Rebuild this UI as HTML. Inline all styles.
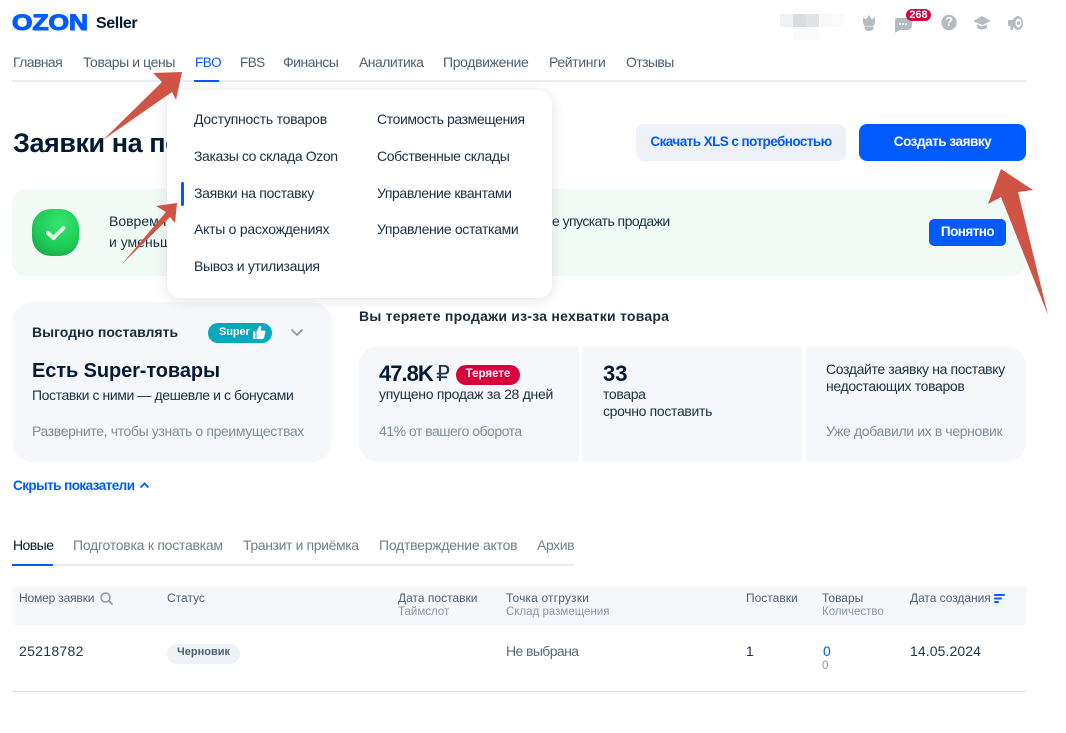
<!DOCTYPE html>
<html lang="ru"><head><meta charset="utf-8"><title>Ozon Seller</title>
<style>
*{box-sizing:border-box}
html,body{margin:0;padding:0;background:#fff}
body{width:1066px;height:733px;position:relative;overflow:hidden;font-family:"Liberation Sans",sans-serif;color:#001a34}
.t{position:absolute;white-space:nowrap;font-size:14px;line-height:20px}
.b{position:absolute}
.nav{color:#4d6175;top:52px}
.m{color:#1b2f45}
.g{color:#808d9a}
.th{font-size:12px;line-height:14px;color:#4d5f73}
.sub{font-size:11.5px;line-height:14px;color:#8b97a3}
.tab{color:#6f7f8f;top:535px}
</style></head><body>

<svg class="b" style="left:10px;top:8px" width="82" height="28"><text x="2" y="22" font-family="Liberation Sans" font-weight="700" font-size="22" fill="#005bff" stroke="#005bff" stroke-width="1.1" textLength="76" lengthAdjust="spacingAndGlyphs">OZON</text></svg>
<span class="t" style="left:96px;top:14px;font-size:16px;font-weight:700;color:#001a34;letter-spacing:-.4px">Seller</span>

<span class="t nav" style="left:13px;letter-spacing:-.6px">Главная</span>
<span class="t nav" style="left:83px;letter-spacing:-.4px">Товары и цены</span>
<span class="t nav" style="left:195px;top:52.500px;color:#005bff;font-size:13.500px;letter-spacing:-.55px">FBO</span>
<span class="t nav" style="left:240px;top:52.500px;font-size:13.500px;letter-spacing:-.55px">FBS</span>
<span class="t nav" style="left:283px;letter-spacing:-.5px">Финансы</span>
<span class="t nav" style="left:359px;letter-spacing:-.55px">Аналитика</span>
<span class="t nav" style="left:443px;letter-spacing:-.35px">Продвижение</span>
<span class="t nav" style="left:549px;letter-spacing:-.35px">Рейтинги</span>
<span class="t nav" style="left:626px;letter-spacing:-.6px">Отзывы</span>
<div class="b" style="left:12px;top:80px;width:1014px;height:2px;background:#e8edf3"></div>
<div class="b" style="left:194px;top:80px;width:25px;height:2px;background:#005bff"></div>

<!-- pixelated account block -->
<div class="b" style="left:780px;top:14px;width:13px;height:13px;background:#f0f1f3"></div>
<div class="b" style="left:793px;top:14px;width:13px;height:13px;background:#d9dde3"></div>
<div class="b" style="left:806px;top:14px;width:13px;height:13px;background:#dfe3e5"></div>
<div class="b" style="left:819px;top:14px;width:13px;height:13px;background:#f8f8f9"></div>
<div class="b" style="left:832px;top:14px;width:13px;height:13px;background:#fbfbfc"></div>
<div class="b" style="left:793px;top:27px;width:13px;height:13px;background:#f9fafb"></div>
<div class="b" style="left:806px;top:27px;width:13px;height:13px;background:#f9fafb"></div>

<!-- header icons -->
<svg class="b" style="left:860px;top:12px" width="170" height="22" viewBox="0 0 170 22" fill="#b4bbc2">
<path d="M3 5l3 2.500 3-4.500 3 4.500 3-2.500v6l-1.500 3h-9L3 11z"/><path d="M4.500 14.500h9c.5 3-2 4.500-4.500 4.500s-5-1.500-4.500-4.500z"/>
<path d="M37 6h10c3 0 5 2 5 5v2c0 3-2 5-5 5h-7l-4 2.500c-.5.300-1-.1-1-.6V10c0-2.500 0-4 2-4z"/>
<circle cx="89" cy="10.500" r="7.700"/>
<path d="M114 8.500L122 4l8 4.500v1l-8 3.500-8-3.500z"/><path d="M117 12.500l5 2 5-2v3c-1.500 1.500-3.300 2-5 2s-3.500-.5-5-2z"/>
<path d="M149 8h3l6-4.500v15L153 15v3h-2.500v-4H149c-1 0-1 -.5-1-1.500V9.500c0-1 0-1.500 1-1.500z"/><ellipse cx="158" cy="11" rx="5" ry="7"/><ellipse cx="158.500" cy="11" rx="3" ry="4.500" fill="#fff"/><circle cx="158.500" cy="11" r="1.800"/>
</svg>
<span class="t" style="left:945px;top:13px;color:#fff;font-size:13px;line-height:18px;font-weight:700">?</span>
<div class="b" style="left:906px;top:9px;width:25px;height:12px;border-radius:6px;background:#d6003c;color:#fff;font-size:11px;line-height:12px;font-weight:700;text-align:center">268</div>
<div class="b" style="left:899px;top:23px;width:2px;height:2px;background:#fff;box-shadow:3px 0 #fff,6px 0 #fff;opacity:.8"></div>

<span class="t" style="left:13px;top:126px;font-size:27px;line-height:34px;font-weight:700;letter-spacing:-.45px">Заявки на поставку</span>
<div class="b" style="left:636px;top:124px;width:210px;height:37px;border-radius:8px;background:#eef1f7;color:#005bff;font-size:13.500px;line-height:35px;font-weight:700;text-align:center;letter-spacing:-.56px">Скачать XLS с потребностью</div>
<div class="b" style="left:859px;top:124px;width:167px;height:37px;border-radius:8px;background:#005bff;color:#fff;font-size:13.500px;line-height:35px;font-weight:700;text-align:center;letter-spacing:-.45px">Создать заявку</div>

<!-- banner -->
<div class="b" style="left:12px;top:189px;width:1014px;height:87px;border-radius:14px;background:#f1faf4"></div>
<div class="b" style="left:32px;top:209px;width:47px;height:47px;border-radius:19px;background:radial-gradient(circle at 60% 30%,#35e56f 0,#1fcb57 55%,#12993d 100%)"></div>
<svg class="b" style="left:32px;top:209px" width="47" height="47"><path d="M16 24l5.500 5L31.500 19" fill="none" stroke="#e6f7ea" stroke-width="4" stroke-linecap="round" stroke-linejoin="round"/></svg>
<span class="t" style="left:109px;top:211px;color:#1b2f45">Вовремя пополняйте товары</span>
<span class="t" style="left:109px;top:232px;color:#1b2f45">и уменьшить расходы</span>
<span class="t" style="left:552px;top:211px;color:#1b2f45;letter-spacing:-.55px">е упускать продажи</span>
<div class="b" style="left:929px;top:219px;width:77px;height:27px;border-radius:5px;background:#005bff;color:#fff;font-size:13.500px;line-height:26px;font-weight:700;text-align:center;letter-spacing:-.55px">Понятно</div>

<!-- left card -->
<div class="b" style="left:12px;top:302px;width:320px;height:160px;border-radius:20px;background:#f5f7fb"></div>
<span class="t" style="left:32px;top:322px;font-weight:700;color:#1a2b3e;letter-spacing:0">Выгодно поставлять</span>
<div class="b" style="left:208px;top:323px;width:64px;height:20px;border-radius:10px;background:#05a8bf"></div>
<span class="t" style="left:219px;top:322px;font-size:11px;font-weight:700;color:#fff;letter-spacing:-.1px">Super</span>
<svg class="b" style="left:252px;top:325px" width="14" height="15" fill="#fff"><path d="M1 6.500h2.500V14H1zM4.500 6.500L7.500 1c1.300-.2 2 .8 1.800 2L8.800 5.500h3.200c1 0 1.500.8 1.300 1.700l-1.200 5.600c-.2.800-.7 1.200-1.500 1.200H4.500z"/></svg>
<svg class="b" style="left:290px;top:327px" width="14" height="12"><path d="M1.500 2.500L7 8l5.500-5.500" fill="none" stroke="#8d98a4" stroke-width="1.700"/></svg>
<span class="t" style="left:32px;top:359px;font-size:20px;line-height:24px;font-weight:700;letter-spacing:-.1px">Есть Super-товары</span>
<span class="t" style="left:32px;top:385px;letter-spacing:-.41px;color:#1b2f45">Поставки с ними — дешевле и с бонусами</span>
<span class="t g" style="left:32px;top:421px;letter-spacing:-.37px">Разверните, чтобы узнать о преимуществах</span>
<span class="t" style="left:13px;top:475.500px;color:#005bff;font-weight:700;font-size:13.500px;letter-spacing:-.55px">Скрыть показатели</span>
<svg class="b" style="left:139px;top:481px" width="11" height="9"><path d="M1.500 6.500L5.500 2.500l4 4" fill="none" stroke="#005bff" stroke-width="1.800"/></svg>

<!-- stats -->
<span class="t" style="left:359px;top:306px;font-weight:700;letter-spacing:.24px;color:#1a2b3e">Вы теряете продажи из-за нехватки товара</span>
<div class="b" style="left:359px;top:346px;width:220px;height:116px;border-radius:20px 0 0 20px;background:#f5f7fb"></div>
<div class="b" style="left:582px;top:346px;width:220px;height:116px;background:#f5f7fb"></div>
<div class="b" style="left:806px;top:346px;width:220px;height:116px;border-radius:0 20px 20px 0;background:#f5f7fb"></div>
<span class="t" style="left:379px;top:361px;font-size:22px;line-height:26px;font-weight:700;letter-spacing:-1px">47.8K</span>
<span class="t" style="left:436px;top:361px;font-size:22px;line-height:26px;color:#22364b">₽</span>
<div class="b" style="left:456px;top:365px;width:64px;height:20px;border-radius:10px;background:#d6003c;color:#fff;font-size:11.500px;line-height:18px;font-weight:700;text-align:center">Теряете</div>
<span class="t" style="left:379px;top:384px;letter-spacing:-.29px;color:#1b2f45">упущено продаж за 28 дней</span>
<span class="t g" style="left:379px;top:421px;letter-spacing:-.5px">41% от вашего оборота</span>
<span class="t" style="left:603px;top:361px;font-size:22px;line-height:26px;font-weight:700">33</span>
<span class="t" style="left:603px;top:384px;color:#1b2f45;letter-spacing:-.35px">товара</span>
<span class="t" style="left:603px;top:401px;color:#1b2f45;letter-spacing:-.33px">срочно поставить</span>
<span class="t" style="left:826px;top:359px;color:#1b2f45;letter-spacing:-.36px">Создайте заявку на поставку</span>
<span class="t" style="left:826px;top:376px;color:#1b2f45;letter-spacing:-.35px">недостающих товаров</span>
<span class="t g" style="left:826px;top:421px;letter-spacing:-.37px">Уже добавили их в черновик</span>

<!-- tabs -->
<span class="t tab" style="left:13px;color:#001a34;letter-spacing:-.55px">Новые</span>
<span class="t tab" style="left:73px;letter-spacing:-.25px">Подготовка к поставкам</span>
<span class="t tab" style="left:243px;letter-spacing:-.38px">Транзит и приёмка</span>
<span class="t tab" style="left:379px;letter-spacing:-.25px">Подтверждение актов</span>
<span class="t tab" style="left:537px;letter-spacing:-.4px">Архив</span>
<div class="b" style="left:12px;top:564px;width:562px;height:2px;background:#e8edf3"></div>
<div class="b" style="left:12px;top:564px;width:41px;height:2px;background:#005bff"></div>

<!-- table -->
<div class="b" style="left:12px;top:586px;width:1014px;height:39px;background:#f5f7fb"></div>
<span class="t th" style="left:19px;top:591px;letter-spacing:-.17px">Номер заявки</span>
<svg class="b" style="left:99px;top:591px" width="15" height="15"><circle cx="6.500" cy="6.500" r="4.500" fill="none" stroke="#8d98a4" stroke-width="1.500"/><path d="M10 10l3.500 3.500" stroke="#8d98a4" stroke-width="1.700"/></svg>
<span class="t th" style="left:167px;top:591px">Статус</span>
<span class="t th" style="left:398px;top:591px">Дата поставки</span>
<span class="t sub" style="left:398px;top:605px">Таймслот</span>
<span class="t th" style="left:506px;top:591px;letter-spacing:.15px">Точка отгрузки</span>
<span class="t sub" style="left:506px;top:605px">Склад размещения</span>
<span class="t th" style="left:746px;top:591px">Поставки</span>
<span class="t th" style="left:822px;top:591px">Товары</span>
<span class="t sub" style="left:822px;top:605px">Количество</span>
<span class="t th" style="left:910px;top:591px;letter-spacing:-.05px">Дата создания</span>
<svg class="b" style="left:994px;top:594px" width="12" height="10" fill="#005bff"><rect x="0" y="0" width="11" height="2" rx="1"/><rect x="0" y="3.500" width="8" height="2" rx="1"/><rect x="0" y="7" width="5" height="2" rx="1"/></svg>

<span class="t" style="left:19px;top:641px;letter-spacing:.3px;color:#22364b">25218782</span>
<div class="b" style="left:167px;top:644px;width:73px;height:20px;border-radius:10px;background:#eef1f6;color:#4d5f73;font-size:11px;line-height:17px;font-weight:700;text-align:center">Черновик</div>
<span class="t" style="left:506px;top:641px;color:#5b6b7b;letter-spacing:-.6px">Не выбрана</span>
<span class="t" style="left:746px;top:641px;color:#22364b">1</span>
<span class="t" style="left:823px;top:641px;color:#005bff">0</span>
<span class="t sub" style="left:822px;top:659px">0</span>
<span class="t" style="left:910px;top:641px;letter-spacing:.1px;color:#22364b">14.05.2024</span>
<div class="b" style="left:12px;top:691px;width:1014px;height:1px;background:#d9dee5"></div>

<!-- menu -->
<div class="b" style="left:167px;top:90px;width:385px;height:208px;border-radius:14px;background:#fff;box-shadow:0 2px 14px rgba(0,26,52,.12)"></div>
<div class="b" style="left:181px;top:182px;width:3px;height:24px;border-radius:2px;background:#005bff"></div>
<span class="t m" style="left:194px;top:109px;letter-spacing:-.26px">Доступность товаров</span>
<span class="t m" style="left:194px;top:146px;letter-spacing:-.4px">Заказы со склада Ozon</span>
<span class="t m" style="left:194px;top:183px;letter-spacing:-.32px">Заявки на поставку</span>
<span class="t m" style="left:194px;top:219px;letter-spacing:-.26px">Акты о расхождениях</span>
<span class="t m" style="left:194px;top:256px;letter-spacing:-.31px">Вывоз и утилизация</span>
<span class="t m" style="left:377px;top:109px;letter-spacing:-.4px">Стоимость размещения</span>
<span class="t m" style="left:377px;top:146px;letter-spacing:-.36px">Собственные склады</span>
<span class="t m" style="left:377px;top:183px;letter-spacing:-.4px">Управление квантами</span>
<span class="t m" style="left:377px;top:219px;letter-spacing:-.35px">Управление остатками</span>

<!-- arrows -->
<svg class="b" style="left:0;top:0" width="1066" height="733" fill="#cf5445">
<path d="M182 72L153 73 162 82 103 140 172 92 176 100z"/>
<path d="M177 203L156 206 166 212 122 264 170 217 175 223z"/>
<path d="M1001 169L988 204 1001 197 1048 315 1018 192 1033 190z"/>
</svg>
</body></html>
